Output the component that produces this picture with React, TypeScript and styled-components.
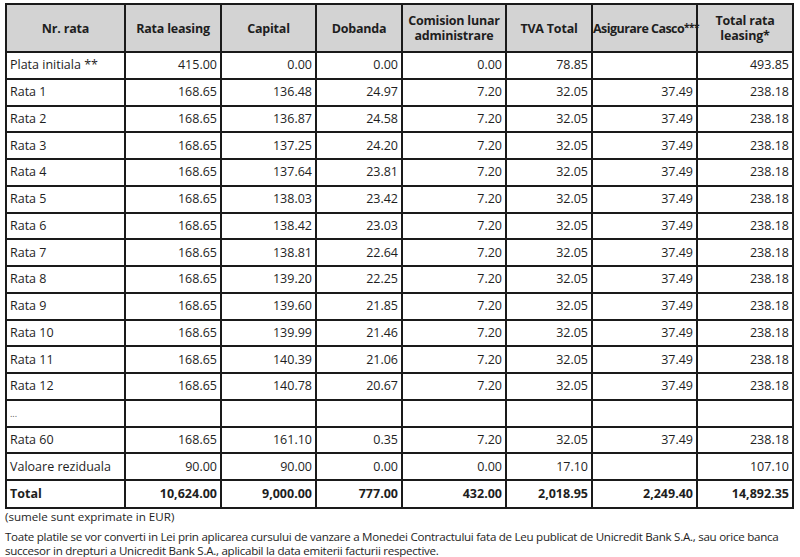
import React from 'react';
import styled, { createGlobalStyle } from 'styled-components';

const GlobalStyle = createGlobalStyle`
  html, body {
    margin: 0;
    padding: 0;
    background: #ffffff;
  }
  body {
    font-family: "Open Sans", "Noto Sans", sans-serif;
    color: #1e1e1e;
  }
`;

const Page = styled.div`
  padding: 3px 6px 0 5px;
  width: 800px;
  box-sizing: border-box;
`;

const Table = styled.table`
  border-collapse: collapse;
  table-layout: fixed;
  width: 789px;
  font-size: 12.5px;
`;

const HeadCell = styled.th<{ $tight?: boolean }>`
  background: #d3d3d3;
  border: 2px solid #1a1a1a;
  height: 46px;
  padding: 0 ${p => (p.$tight ? '0' : '2px')};
  font-weight: 700;
  font-size: 12.5px;
  line-height: 15px;
  text-align: center;
  white-space: pre;
  letter-spacing: ${p => (p.$tight ? '-0.55px' : '-0.2px')};
  overflow: visible;
`;

const Stars = styled.span`
  font-size: 10px;
  vertical-align: 2px;
  letter-spacing: -0.5px;
`;

const Row = styled.tr<{ $total?: boolean }>`
  height: ${p => (p.$total ? '28px' : '26.75px')};
  font-weight: ${p => (p.$total ? 700 : 400)};
`;

const Cell = styled.td<{ $label?: boolean }>`
  border: 2px solid #1a1a1a;
  padding: 0 3px;
  text-align: ${p => (p.$label ? 'left' : 'right')};
  white-space: nowrap;
  line-height: 18px;
`;

const Dots = styled.span`
  font-size: 9px;
  color: #555;
`;

const Notes = styled.div`
  font-size: 11.6px;
  line-height: 14px;
  color: #1e1e1e;
`;

const Currency = styled.p`
  margin: 1px 0 6px 0;
`;

const Paragraph = styled.p`
  margin: 0;
  letter-spacing: -0.28px;
`;

const columns = [
  { title: 'Nr. rata', width: 119 },
  { title: 'Rata leasing', width: 96 },
  { title: 'Capital', width: 95 },
  { title: 'Dobanda', width: 86 },
  { title: 'Comision lunar\nadministrare', width: 104 },
  { title: 'TVA Total', width: 86 },
  { title: 'Asigurare Casco', width: 105, stars: '***' },
  { title: 'Total rata\nleasing*', width: 96 },
];

type Line = { label: string; values: string[]; total?: boolean; dots?: boolean };

const capital = ['136.48', '136.87', '137.25', '137.64', '138.03', '138.42', '138.81', '139.20', '139.60', '139.99', '140.39', '140.78'];
const dobanda = ['24.97', '24.58', '24.20', '23.81', '23.42', '23.03', '22.64', '22.25', '21.85', '21.46', '21.06', '20.67'];

const lines: Line[] = [
  { label: 'Plata initiala **', values: ['415.00', '0.00', '0.00', '0.00', '78.85', '', '493.85'] },
  ...capital.map((c, i) => ({
    label: `Rata ${i + 1}`,
    values: ['168.65', c, dobanda[i], '7.20', '32.05', '37.49', '238.18'],
  })),
  { label: '...', values: ['', '', '', '', '', '', ''], dots: true },
  { label: 'Rata 60', values: ['168.65', '161.10', '0.35', '7.20', '32.05', '37.49', '238.18'] },
  { label: 'Valoare reziduala', values: ['90.00', '90.00', '0.00', '0.00', '17.10', '', '107.10'] },
  { label: 'Total', values: ['10,624.00', '9,000.00', '777.00', '432.00', '2,018.95', '2,249.40', '14,892.35'], total: true },
];

const App = () => (
  <Page>
    <GlobalStyle />
    <Table>
      <colgroup>
        {columns.map(c => (
          <col key={c.title} style={{ width: c.width }} />
        ))}
      </colgroup>
      <thead>
        <tr>
          {columns.map(c => (
            <HeadCell key={c.title} $tight={!!c.stars}>
              {c.title}
              {c.stars && <Stars>{c.stars}</Stars>}
            </HeadCell>
          ))}
        </tr>
      </thead>
      <tbody>
        {lines.map(line => (
          <Row key={line.label} $total={line.total}>
            <Cell $label>{line.dots ? <Dots>...</Dots> : line.label}</Cell>
            {line.values.map((v, i) => (
              <Cell key={i}>{v}</Cell>
            ))}
          </Row>
        ))}
      </tbody>
    </Table>
    <Notes>
      <Currency>(sumele sunt exprimate in EUR)</Currency>
      <Paragraph>
        Toate platile se vor converti in Lei prin aplicarea cursului de vanzare a Monedei Contractului fata de Leu
        publicat de Unicredit Bank S.A., sau orice banca succesor in drepturi a Unicredit Bank S.A., aplicabil la data
        emiterii facturii respective.
      </Paragraph>
    </Notes>
  </Page>
);

export default App;
